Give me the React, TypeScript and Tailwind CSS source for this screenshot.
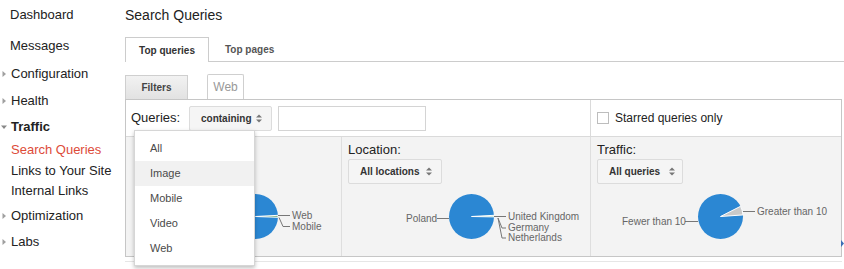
import React from 'react';

const FONT = { fontFamily: '"Liberation Sans", Arial, sans-serif' };
const BLUE = '#2b87d3';

type NavItem = { label: string; h: number; arrow?: 'right' | 'down'; active?: boolean; bold?: boolean; top?: boolean };

const NAV: NavItem[] = [
  { label: 'Dashboard', h: 29, top: true },
  { label: 'Messages', h: 33, top: true },
  { label: 'Configuration', h: 24, arrow: 'right' },
  { label: 'Health', h: 30, arrow: 'right' },
  { label: 'Traffic', h: 22, arrow: 'down', bold: true },
  { label: 'Search Queries', h: 24, active: true },
  { label: 'Links to Your Site', h: 18 },
  { label: 'Internal Links', h: 22 },
  { label: 'Optimization', h: 28, arrow: 'right' },
  { label: 'Labs', h: 24, arrow: 'right' },
];

function Arrow({ dir }: { dir: 'right' | 'down' }) {
  return (
    <svg width="7" height="7" viewBox="0 0 7 7" className="absolute left-[1px] top-1/2 -translate-y-1/2">
      {dir === 'right' ? <path d="M1.5 0.5 L5 3.5 L1.5 6.5 Z" fill="#a0a0a0" /> : <path d="M0 2 L6 2 L3 5.5 Z" fill="#888" />}
    </svg>
  );
}

function Sidebar() {
  return (
    <div className="w-[118px] shrink-0">
      {NAV.map((n) => (
        <div
          key={n.label}
          style={{ height: n.h }}
          className={`relative flex items-center text-[13px] ${n.top ? 'pl-[10px]' : 'pl-[11px]'} ${
            n.active ? 'text-[#dd4b39]' : 'text-[#222]'
          } ${n.bold ? 'font-bold' : ''}`}
        >
          {n.arrow && <Arrow dir={n.arrow} />}
          {n.label}
        </div>
      ))}
    </div>
  );
}

function UpDown() {
  return (
    <svg width="6" height="9" viewBox="0 0 6 9">
      <path d="M0 3.5 L3 0.5 L6 3.5 Z" fill="#777" />
      <path d="M0 5.5 L3 8.5 L6 5.5 Z" fill="#777" />
    </svg>
  );
}

function Select({ label, w, pr }: { label: string; w: number; pr: number }) {
  return (
    <div
      style={{ width: w, paddingRight: pr }}
      className="h-[25px] flex items-center justify-between pl-[11px] bg-[#f5f5f5] border border-[#dcdcdc] rounded-[2px] text-[10px] font-bold text-[#333]"
    >
      <span>{label}</span>
      <UpDown />
    </div>
  );
}

function slice(cx: number, cy: number, r: number, a0: number, a1: number) {
  const rad = (a: number) => (a * Math.PI) / 180;
  const x0 = cx + r * Math.cos(rad(a0));
  const y0 = cy + r * Math.sin(rad(a0));
  const x1 = cx + r * Math.cos(rad(a1));
  const y1 = cy + r * Math.sin(rad(a1));
  return `M${cx} ${cy} L${x0} ${y0} A${r} ${r} 0 0 1 ${x1} ${y1} Z`;
}

const CX = 129.5;
const CY = 32.5;
const R = 22.5;
const LBL = 'fill-[#666] text-[10px]';

function Pie({ children, slices }: { children?: React.ReactNode; slices: { a0: number; a1: number; fill: string }[] }) {
  return (
    <svg width="248" height="72" viewBox="0 0 248 72" className="block" style={FONT}>
      <circle cx={CX} cy={CY} r={R} fill={BLUE} />
      {slices.map((s, i) => (
        <path key={i} d={slice(CX, CY, R, s.a0, s.a1)} fill={s.fill} stroke="#fff" strokeWidth="1" />
      ))}
      {children}
    </svg>
  );
}

function Column({ label, select, children, width, border }: { label?: string; select?: React.ReactNode; children: React.ReactNode; width: number; border?: boolean }) {
  return (
    <div style={{ width }} className={`shrink-0 flex flex-col ${border ? 'border-l border-[#dedede]' : ''}`}>
      <div className="h-[21px] pt-[5px] pl-[6px] text-[13px] leading-[16px] text-[#222]">{label}</div>
      <div className="h-[26px] pl-[6px] pt-px">{select}</div>
      {children}
    </div>
  );
}

function Dropdown() {
  const items = ['All', 'Image', 'Mobile', 'Video', 'Web'];
  return (
    <div className="absolute left-[8px] top-[30px] w-[121px] h-[136px] pt-[5px] bg-white border border-[#d6d6d6] shadow-[0_2px_4px_rgba(0,0,0,0.25)] z-10">
      {items.map((it) => (
        <div
          key={it}
          className={`h-[25px] flex items-center pl-[15px] text-[11px] text-[#4a4a4a] ${it === 'Image' ? 'bg-[#f1f1f1]' : ''}`}
        >
          {it}
        </div>
      ))}
    </div>
  );
}

export default function App() {
  return (
    <div style={FONT} className="w-[844px] h-[269px] bg-white flex overflow-hidden">
      <Sidebar />

      <div className="relative flex-1 pl-[7px]">
        {/* Title */}
        <div className="h-[37px] pt-[7px] text-[14px] text-[#222] leading-[16px]">Search Queries</div>

        {/* Tabs */}
        <div className="h-[25px] flex items-end border-b border-[#ccc]">
          <div className="-mb-px h-[25px] w-[84px] flex items-center justify-center bg-white border border-b-0 border-[#ccc] text-[10px] font-bold text-[#333]">
            Top queries
          </div>
          <div className="h-[24px] flex items-center pl-[16px] text-[10px] font-bold text-[#555]">Top pages</div>
        </div>

        {/* Filter tabs */}
        <div className="h-[37px] flex items-end">
          <div className="h-[24px] w-[63px] flex items-center justify-center bg-gradient-to-b from-[#f2f2f2] to-[#e2e2e2] border border-b-0 border-[#cfcfcf] text-[10px] font-bold text-[#444]">
            Filters
          </div>
          <div className="ml-[19px] h-[25px] w-[37px] flex items-center justify-center bg-white border border-b-0 border-[#cfcfcf] rounded-t-[2px] text-[12px] text-[#999]">
            Web
          </div>
        </div>

        {/* Panel */}
        <div className="relative w-[717px] border border-[#c6c6c6]">
          <div className="h-[37px] flex border-b border-[#dadada]">
            <div className="w-[464px] flex items-center pl-[5px]">
              <span className="w-[58px] text-[13px] text-[#222]">Queries:</span>
              <Select label="containing" w={83} pr={9} />
              <div className="ml-[6px] w-[148px] h-[25px] bg-white border border-[#d4d4d4]" />
            </div>
            <div className="flex-1 flex items-center pl-[6px] border-l border-[#dadada]">
              <div className="w-[12px] h-[12px] bg-white border border-[#bdbdbd]" />
              <span className="ml-[6px] text-[12px] text-[#222]">Starred queries only</span>
            </div>
          </div>

          <div className="h-[119px] flex bg-[#f3f3f3]">
            <Column width={215}>
              <Pie slices={[{ a0: -3, a1: 2, fill: '#5f9e6a' }]}>
                <path d="M152 31.5 H164" stroke="#777" strokeWidth="1" fill="none" />
                <path d="M153 33.5 L157 42.5 H164" stroke="#777" strokeWidth="1" fill="none" />
                <text x="166" y="35" className={LBL}>Web</text>
                <text x="166" y="46" className={LBL}>Mobile</text>
              </Pie>
            </Column>
            <Column width={249} border label="Location:" select={<Select label="All locations" w={94} pr={9} />}>
              <Pie slices={[{ a0: -3, a1: 1, fill: '#8fd0b0' }]}>
                <path d="M95 34.5 H107" stroke="#777" strokeWidth="1" fill="none" />
                <text x="64" y="38" className={LBL}>Poland</text>
                <path d="M152 32.5 H164" stroke="#777" strokeWidth="1" fill="none" />
                <path d="M156 34 L160 44 H164" stroke="#777" strokeWidth="1" fill="none" />
                <path d="M156 34 L160 54 H164" stroke="#777" strokeWidth="1" fill="none" />
                <text x="166" y="36" className={LBL}>United Kingdom</text>
                <text x="166" y="47" className={LBL}>Germany</text>
                <text x="166" y="57" className={LBL}>Netherlands</text>
              </Pie>
            </Column>
            <Column width={251} border label="Traffic:" select={<Select label="All queries" w={86} pr={7} />}>
              <Pie slices={[{ a0: -27, a1: -4, fill: '#c9c9c9' }]}>
                <path d="M152 27.5 H164" stroke="#777" strokeWidth="1" fill="none" />
                <text x="166" y="31" className={LBL}>Greater than 10</text>
                <path d="M94 37.5 H107" stroke="#777" strokeWidth="1" fill="none" />
                <text x="31" y="41" className={LBL}>Fewer than 10</text>
              </Pie>
            </Column>
          </div>

          <Dropdown />
        </div>

        <div className="mt-[4px] w-[717px] h-px bg-[#e6e6e6]" />

        <svg width="3" height="7" viewBox="0 0 3 7" className="absolute right-0 top-[240px]">
          <path d="M0 0 L3 3.5 L0 7 Z" fill="#3b6fb6" />
        </svg>
      </div>
    </div>
  );
}
